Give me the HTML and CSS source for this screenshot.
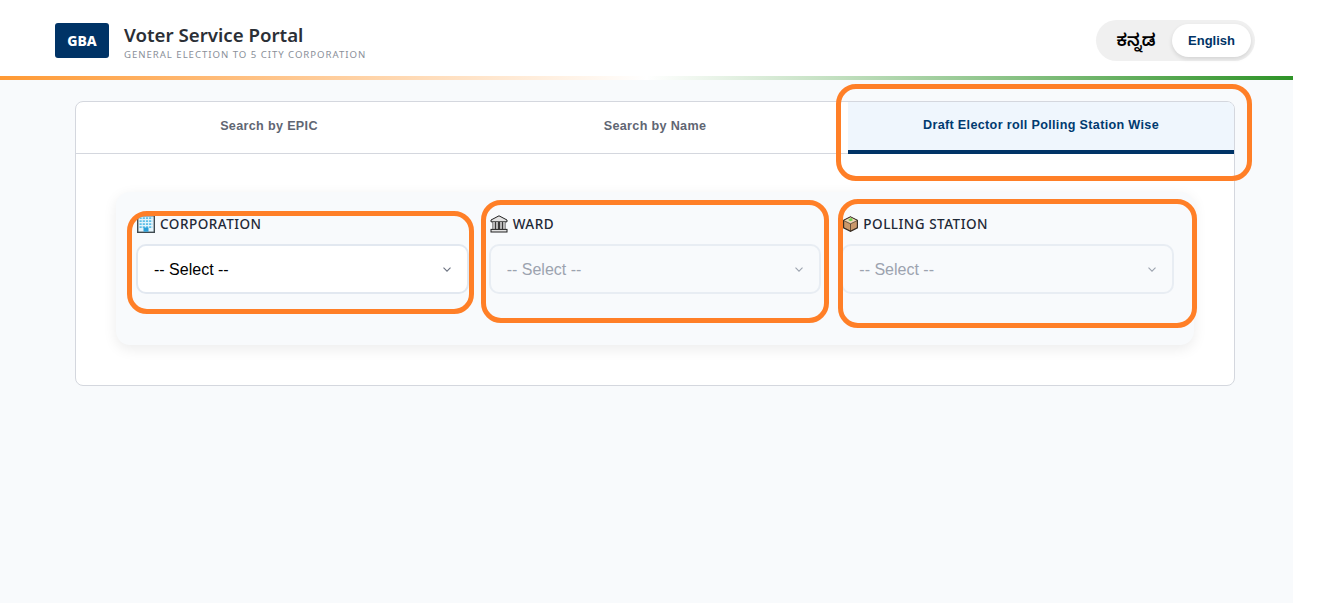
FILE: index.html
```html
<!DOCTYPE html>
<html lang="en">
<head>
<meta charset="utf-8">
<title>Voter Service Portal</title>
<link rel="stylesheet" href="styles.css">
</head>
<body>
<div class="app">
  <header class="header">
    <div class="brand">
      <div class="logo">GBA</div>
      <div class="brand-text">
        <div class="title">Voter Service Portal</div>
        <div class="subtitle">GENERAL ELECTION TO 5 CITY CORPORATION</div>
      </div>
    </div>
    <div class="lang">
      <button class="lang-btn lang-kn">ಕನ್ನಡ</button>
      <button class="lang-btn lang-active">English</button>
    </div>
  </header>
  <div class="tricolor"></div>
  <main class="main">
    <section class="card">
      <nav class="tabs">
        <div class="tab">Search by EPIC</div>
        <div class="tab">Search by Name</div>
        <div class="tab tab-active">Draft Elector roll Polling Station Wise</div>
      </nav>
      <div class="card-body">
        <div class="panel">
          <div class="field">
            <label class="label">
              <svg class="emoji" viewBox="0 0 18 18"><rect x=".7" y=".7" width="16.600" height="16.600" fill="#e4f4fb" stroke="#3f4a50" stroke-width="1.400"/><path d="M2.500 3.200h13M2.500 6.200h13M2.500 9.200h13M2.500 12.200h13" stroke="#5cbfe8" stroke-width="1.700" stroke-dasharray="2.200 1"/><rect x="6.500" y="12.500" width="5" height="4.200" fill="#2b9fd8"/></svg>
              CORPORATION</label>
            <div class="select-wrap">
              <select class="select"><option>-- Select --</option></select>
              <svg class="chev" viewBox="0 0 8 5"><path d="M.5.700l3.500 3.500L7.500.700" fill="none" stroke="#6b7280" stroke-width="1.100"/></svg>
            </div>
          </div>
          <div class="field">
            <label class="label">
              <svg class="emoji" viewBox="0 0 18 18"><path d="M9 .8L1 5v1.800h16V5z" fill="#e3e3e3" stroke="#222" stroke-width="1"/><rect x="2.500" y="7" width="13" height="7.500" fill="#3a3a3a"/><path d="M4 7v7.500M7 7v7.500M11 7v7.500M14 7v7.500" stroke="#d8d8d8" stroke-width="1.600"/><rect x="1" y="14.400" width="16" height="2.600" fill="#e3e3e3" stroke="#222" stroke-width="1"/></svg>
              WARD</label>
            <div class="select-wrap">
              <select class="select" disabled><option>-- Select --</option></select>
              <svg class="chev" viewBox="0 0 8 5"><path d="M.5.700l3.500 3.500L7.500.700" fill="none" stroke="#9ca3af" stroke-width="1.100"/></svg>
            </div>
          </div>
          <div class="field">
            <label class="label label-narrow">
              <svg class="emoji" viewBox="0 0 18 18"><path d="M9 1.500l7.300 3.700v7.800L9 16.700 1.700 13V5.200z" fill="#c9986a" stroke="#33291f" stroke-width="1.200"/><path d="M1.700 5.200L9 8.800l7.300-3.600L9 1.500z" fill="#eed6b6" stroke="#33291f" stroke-width=".7"/><path d="M9 8.800v7.900" stroke="#33291f" stroke-width=".7"/><path d="M6.500 4.700L9.800 2.300l1.700 2.600L9 6z" fill="#6fd44e"/></svg>
              POLLING STATION</label>
            <div class="select-wrap">
              <select class="select" disabled><option>-- Select --</option></select>
              <svg class="chev" viewBox="0 0 8 5"><path d="M.5.700l3.500 3.500L7.500.700" fill="none" stroke="#9ca3af" stroke-width="1.100"/></svg>
            </div>
          </div>
        </div>
      </div>
    </section>
  </main>
  <div class="ring ring-tab"></div>
  <div class="ring ring-corp"></div>
  <div class="ring ring-ward"></div>
  <div class="ring ring-station"></div>
</div>
</body>
</html>
```
FILE: styles.css
```css
* { box-sizing: border-box; }
html, body { margin: 0; height: 100%; background: #fff; overflow: hidden; }
.app { position: relative; width: 1293px; height: 603px; background: #f8fafc; font-family: "Liberation Sans", Arial, sans-serif; }
.header { height: 76px; background: #fff; display: flex; align-items: center; justify-content: space-between; padding: 5px 38px 0 55px; }
.brand { display: flex; align-items: center; gap: 15px; }
.logo { width: 54px; height: 35px; background: #003366; color: #fff; border-radius: 3px; display: flex; align-items: center; justify-content: center; font: 800 14px "Noto Sans", sans-serif; }
.brand-text { display: flex; flex-direction: column; padding-top: 3px; }
.title { font: 600 18.700px/22px "Noto Sans", sans-serif; color: #2b2f36; }
.subtitle { font: 400 9.600px/12px "Noto Sans", sans-serif; letter-spacing: .97px; color: #8a8f99; margin-top: 3px; }
.lang { width: 159px; height: 41px; background: #f0f0f0; border-radius: 21px; padding: 4px; display: flex; justify-content: space-between; align-items: center; }
.lang-btn { border: 0; background: none; font: 700 13px "Liberation Sans", sans-serif; height: 33px; padding: 0; border-radius: 17px; }
.lang-kn { width: 72px; padding-top: 6px; color: #000; font-size: 17px; font-weight: 600; font-family: "Noto Sans Kannada", "Noto Sans", sans-serif; }
.lang-active { width: 79px; background: #fff; color: #003366; box-shadow: 0 2px 4px rgba(0,0,0,.12); }
.tricolor { height: 4px; background: linear-gradient(90deg, #ff9933 0%, #ffffff 50%, #2e9327 100%); }
.main { padding: 21px 58px 0 75px; }
.card { width: 1160px; height: 285px; background: #fff; border: 1px solid #d4d7de; border-radius: 8px; overflow: hidden; }
.tabs { display: grid; grid-template-columns: repeat(3, 1fr); height: 52px; border-bottom: 1px solid #d4d7de; }
.tab { display: flex; align-items: center; justify-content: center; font-size: 12.600px; font-weight: 700; letter-spacing: .33px; color: #5f6673; padding-bottom: 5px; }
.tab-active { background: #eff6fd; color: #003a70; border-bottom: 4px solid #003366; height: 52px; padding-bottom: 2px; }
.card-body { padding: 38px 40px; }
.panel { display: grid; grid-template-columns: repeat(3, 1fr); gap: 20px; height: 153px; padding: 20px; background: #f8fafc; border-radius: 14px; box-shadow: 0 4px 14px rgba(0,0,0,.08); }
.field { display: flex; flex-direction: column; gap: 10px; }
.label { display: flex; align-items: center; gap: 5px; height: 22px; padding: 2px 0 0 1px; font: 500 13.500px/20px "Noto Sans", sans-serif; letter-spacing: .5px; color: #1f2937; }
.label-narrow { gap: 4px; }
.label-narrow .emoji { width: 17px; }
.emoji { width: 18px; height: 18px; flex: none; }
.select-wrap { position: relative; }
.select { appearance: none; width: 100%; height: 50px; padding: 0 16px; background: #fff; border: 2px solid #e2e8f0; border-radius: 10px; font: 16px "Liberation Sans", Arial, sans-serif; color: #000; opacity: 1; }
.select:disabled { background: #f8fafc; border-color: #e8edf3; color: #9ca3af; }
.chev { position: absolute; right: 18px; top: 23px; width: 8px; height: 5px; }
.ring { position: absolute; border: 5px solid #ff7f27; border-radius: 20px; pointer-events: none; }
.ring-tab { left: 836px; top: 84px; width: 416px; height: 97px; }
.ring-corp { left: 127px; top: 211px; width: 347px; height: 103px; }
.ring-ward { left: 481px; top: 200px; width: 348px; height: 123px; }
.ring-station { left: 838px; top: 199px; width: 359px; height: 129px; }
```
